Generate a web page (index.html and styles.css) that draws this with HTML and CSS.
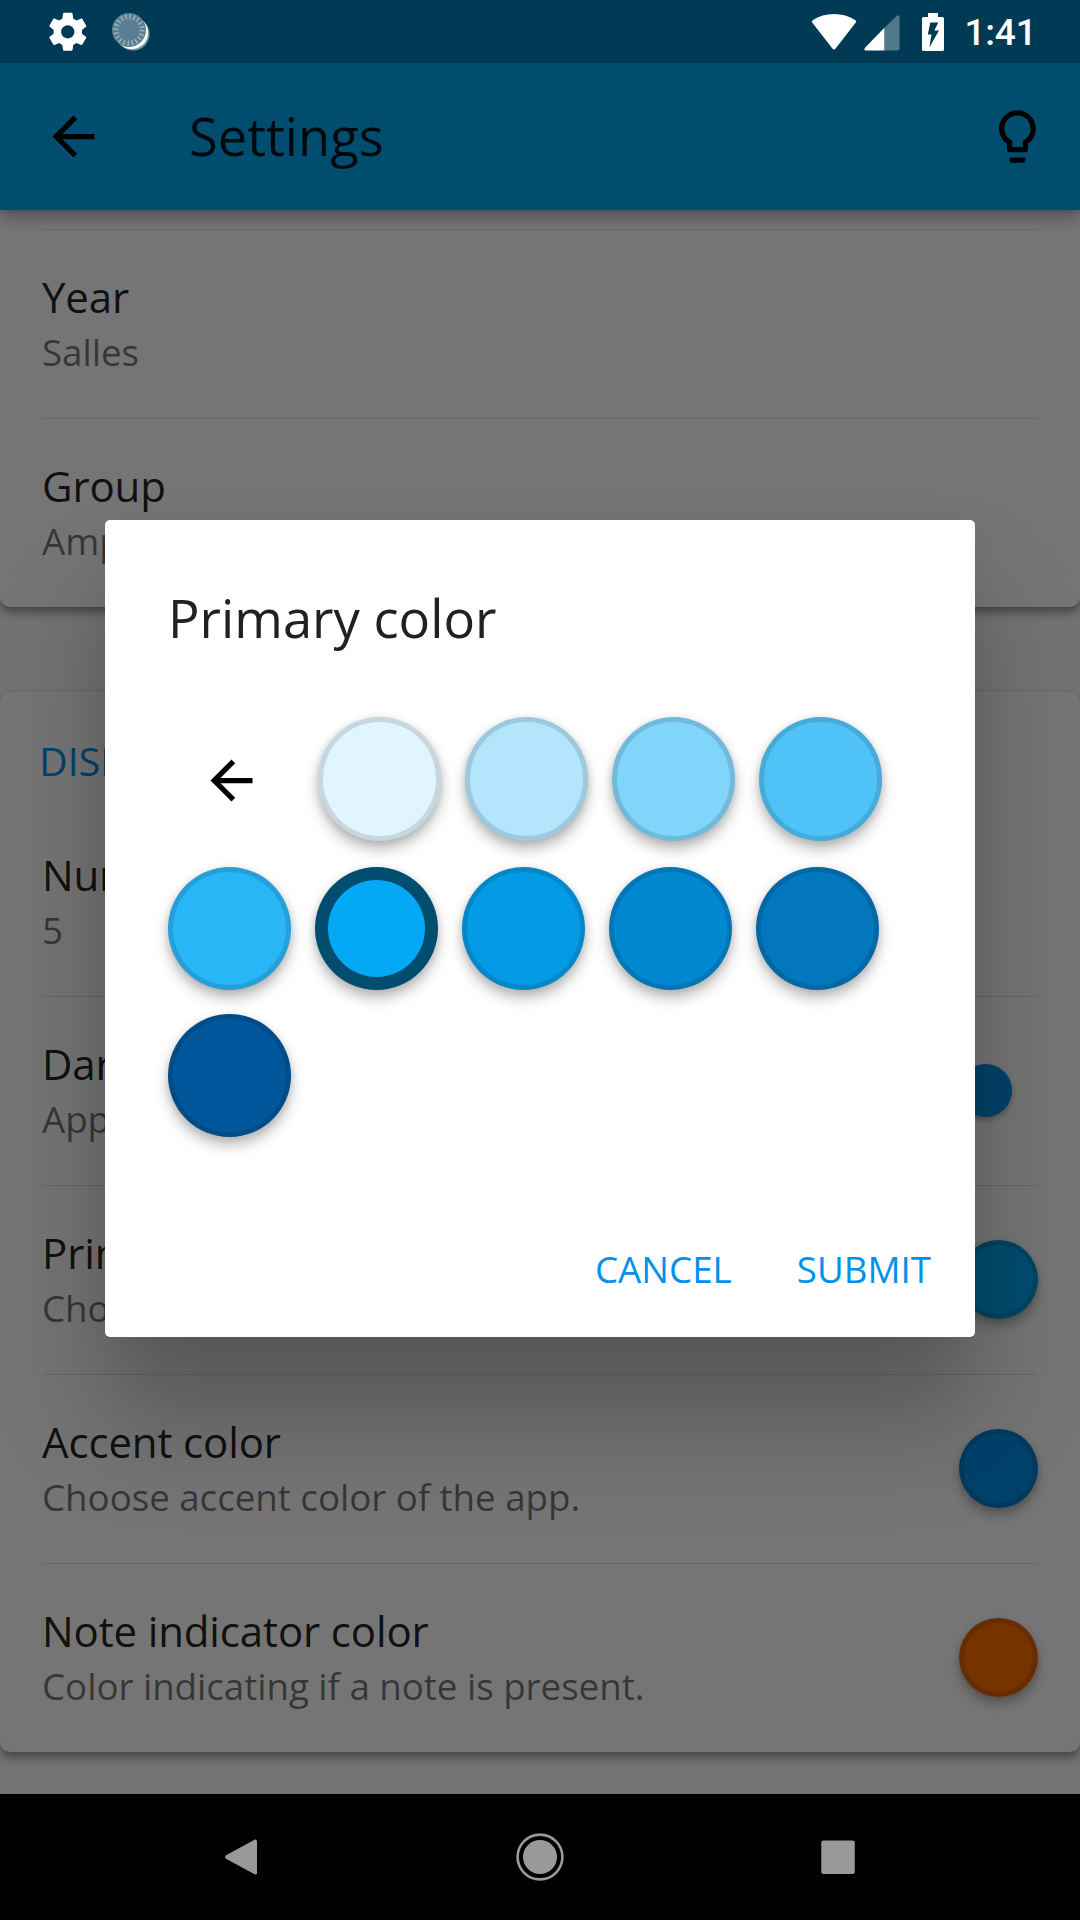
FILE: index.html
```html
<!DOCTYPE html>
<html lang="en">
<head>
<meta charset="utf-8">
<title>Settings</title>
<link rel="stylesheet" href="styles.css">
</head>
<body>
<div class="screen">
  <div class="page">
    <header class="app-bar">
      <svg class="icon" viewBox="0 0 24 24"><path d="M20 11H7.83l5.59-5.59L12 4l-8 8 8 8 1.41-1.41L7.83 13H20v-2z"/></svg>
      <h1 class="app-title">Settings</h1>
      <svg class="icon" viewBox="0 0 24 24"><path d="M9 21c0 .55.45 1 1 1h4c.55 0 1-.45 1-1v-1H9v1zm3-19C8.14 2 5 5.14 5 9c0 2.38 1.19 4.47 3 5.74V17c0 .55.45 1 1 1h6c.55 0 1-.45 1-1v-2.26c1.81-1.27 3-3.36 3-5.74 0-3.86-3.14-7-7-7zm2.85 11.1l-.85.6V16h-4v-2.3l-.85-.6C7.8 12.16 7 10.63 7 9c0-2.76 2.24-5 5-5s5 2.24 5 5c0 1.63-.8 3.16-2.15 4.1z"/></svg>
    </header>
    <main class="content">
      <section class="card card-first">
        <div class="row"><div class="label"><div class="name">Year</div><div class="hint">Salles</div></div></div>
        <div class="row"><div class="label"><div class="name">Group</div><div class="hint">Amphi</div></div></div>
      </section>
      <section class="card">
        <h2 class="section-title">DISPLAY</h2>
        <div class="row no-line"><div class="label"><div class="name">Number of weeks</div><div class="hint">5</div></div></div>
        <div class="row"><div class="label"><div class="name">Dark theme</div><div class="hint">Apply a dark theme.</div></div><div class="switch"><div class="thumb"></div></div></div>
        <div class="row"><div class="label"><div class="name">Primary color</div><div class="hint">Choose primary color of the app.</div></div><div class="dot dot-primary"></div></div>
        <div class="row"><div class="label"><div class="name">Accent color</div><div class="hint">Choose accent color of the app.</div></div><div class="dot dot-accent"></div></div>
        <div class="row"><div class="label"><div class="name">Note indicator color</div><div class="hint">Color indicating if a note is present.</div></div><div class="dot dot-note"></div></div>
      </section>
    </main>
  </div>
  <div class="scrim"></div>

  <div class="status-bar">
    <svg class="gear" viewBox="0 0 24 24"><path d="M19.43 12.98c.04-.32.07-.64.07-.98s-.03-.66-.07-.98l2.11-1.65c.19-.15.24-.42.12-.64l-2-3.46c-.12-.22-.39-.3-.61-.22l-2.49 1c-.52-.4-1.08-.73-1.69-.98l-.38-2.65C14.46 2.18 14.25 2 14 2h-4c-.25 0-.46.18-.49.42l-.38 2.65c-.61.25-1.17.59-1.69.98l-2.49-1c-.23-.09-.49 0-.61.22l-2 3.46c-.13.22-.07.49.12.64l2.11 1.65c-.04.32-.07.65-.07.98s.03.66.07.98l-2.11 1.65c-.19.15-.24.42-.12.64l2 3.46c.12.22.39.3.61.22l2.49-1c.52.4 1.08.73 1.69.98l.38 2.65c.03.24.24.42.49.42h4c.25 0 .46-.18.49-.42l.38-2.65c.61-.25 1.17-.59 1.69-.98l2.49 1c.23.09.49 0 .61-.22l2-3.46c.12-.22.07-.49-.12-.64l-2.11-1.65zM12 15.5c-1.93 0-3.5-1.57-3.5-3.5s1.57-3.5 3.5-3.5 3.5 1.57 3.5 3.5-1.57 3.5-3.5 3.5z"/></svg>
    <svg class="sync" viewBox="0 0 38 38">
      <circle cx="21" cy="21" r="16.5" fill="#7f9aa8"/>
      <circle cx="19.6" cy="19.6" r="16.5" fill="#fff"/>
      <circle cx="17" cy="17" r="17" fill="#5a7f91"/>
      <circle cx="17" cy="17" r="13.2" fill="none" stroke="#a3b7c1" stroke-width="5.2" stroke-dasharray="1.3 2.847"/>
    </svg>
    <div class="spacer"></div>
    <svg class="wifi" viewBox="0 0 46 38"><path d="M1.2 9.6Q0 8.4 1.6 7.3Q11 1 23 1T44.400 7.300Q46 8.400 44.800 9.600L24.600 35.400Q23 37.400 21.400 35.400Z"/></svg>
    <svg class="signal" viewBox="0 0 36 36"><path d="M33 .8Q35.500-1 35.500 2V33.500Q35.500 35.500 33.500 35.500H20.400V12.800Z" opacity=".32"/><path d="M20.400 12.800V35.500H2Q-.6 35.500 1 32.800Z"/></svg>
    <svg class="battery" viewBox="0 0 22 38"><path fill-rule="evenodd" d="M6 0H16V4H20.500Q22 4 22 5.500V36.500Q22 38 20.500 38H1.500Q0 38 0 36.500V5.500Q0 4 1.500 4H6ZM8.300 9.500L5.800 21.500H9.500L7.300 34.500L17 17.500H12.300L16.300 9.500Z"/></svg>
    <span class="clock">1:41</span>
  </div>

  <div class="dialog">
    <h2 class="dialog-title">Primary color</h2>
    <div class="palette">
      <div class="swatches">
        <div class="back"><svg class="icon" viewBox="0 0 24 24"><path d="M20 11H7.830l5.590-5.590L12 4l-8 8 8 8 1.410-1.410L7.830 13H20v-2z"/></svg></div>
        <div class="swatch lb50"></div><div class="swatch lb100"></div><div class="swatch lb200"></div><div class="swatch lb300"></div>
      </div>
      <div class="swatches">
        <div class="swatch lb400"></div><div class="swatch lb500 selected"></div><div class="swatch lb600"></div><div class="swatch lb700"></div><div class="swatch lb800"></div>
      </div>
      <div class="swatches">
        <div class="swatch lb900"></div>
      </div>
    </div>
    <div class="actions"><span>CANCEL</span><span>SUBMIT</span></div>
  </div>

  <nav class="nav-bar">
    <svg viewBox="0 0 48 48"><path d="M38.500 7.500Q39 6 37 6.600L8 22.300Q6 24 8 25.700L37 41.400Q39 42 39 40V8Z"/></svg>
    <svg viewBox="0 0 48 48"><circle cx="24" cy="24" r="17"/><circle cx="24" cy="24" r="22.400" fill="none" stroke="#999" stroke-width="2.600"/></svg>
    <svg viewBox="0 0 48 48"><rect x="7.300" y="7.500" width="33.500" height="33.500" rx="2"/></svg>
  </nav>
</div>
</body>
</html>
```

FILE: styles.css
```css
* { box-sizing: border-box; margin: 0; padding: 0; }

body {
  width: 1080px;
  height: 1920px;
  overflow: hidden;
  background: #000;
  font-family: "Open Sans", "Noto Sans", sans-serif;
}

h1, h2 { font-weight: 400; }

.screen { position: relative; width: 1080px; height: 1920px; overflow: hidden; }

.page { isolation: isolate; display: flex; flex-direction: column; height: 1794px; background: #fafafa; overflow: hidden; }

.app-bar {
  position: relative;
  z-index: 1;
  display: flex;
  align-items: center;
  flex: none;
  height: 210px;
  padding: 63px 31.5px 0 42px;
  background: linear-gradient(rgba(0, 0, 0, .25) 63px, transparent 63px) #03a9f4;
  box-shadow: 0 9px 14px rgba(0, 0, 0, .24), 0 2px 8px rgba(0, 0, 0, .12);
}

.icon { display: block; flex: none; width: 63px; height: 63px; }

.app-title { flex: 1; margin: -2px 0 0 84px; font-size: 52.5px; line-height: 72px; color: rgba(0, 0, 0, .87); }

.content { display: flex; flex-direction: column; gap: 85px; }

.card {
  background: #fff;
  border-radius: 10px;
  box-shadow: 0 6px 10px rgba(0, 0, 0, .34), 0 1px 5px rgba(0, 0, 0, .12);
}

.card-first { padding-top: 19px; border-radius: 0 0 10px 10px; }

.row {
  display: flex;
  align-items: center;
  justify-content: space-between;
  height: 189px;
  margin: 0 42px;
  padding-bottom: 1px;
  border-top: 1px solid rgba(0, 0, 0, .12);
}

.row.no-line { border-top-color: transparent; }

.label { display: flex; flex-direction: column; gap: 2px; padding-bottom: 3px; }
.name { font-size: 42px; line-height: 57px; letter-spacing: -.13px; color: rgba(0, 0, 0, .87); white-space: nowrap; }
.hint { font-size: 36.75px; line-height: 50px; letter-spacing: -.05px; color: rgba(0, 0, 0, .54); white-space: nowrap; }

.section-title { height: 115px; padding: 42px 39.3px 0; font-size: 39.2px; line-height: 54px; color: #0091ea; }

.dot {
  flex: none;
  width: 79px;
  height: 79px;
  border: 5.25px solid rgba(0, 0, 0, .12);
  border-radius: 50%;
  box-shadow: 0 7px 12px rgba(0, 0, 0, .27), 0 1px 6px rgba(0, 0, 0, .1);
}

.dot-primary { background: #03a9f4; }
.dot-accent { background: #0091ea; }
.dot-note { background: #ff6f00; }

.switch { display: flex; align-items: center; width: 87px; height: 37px; margin-right: 26px; border-radius: 19px; background: rgba(0, 145, 234, .5); }
.thumb { width: 53px; height: 53px; margin-left: 34px; border-radius: 50%; background: #0091ea; box-shadow: 0 3px 6px rgba(0, 0, 0, .3); flex: none; }

.scrim { position: absolute; inset: 0 0 126px; background: rgba(0, 0, 0, .54); }

.status-bar { position: absolute; inset: 0 0 auto; display: flex; align-items: center; height: 63px; padding: 0 43.5px 0 45.3px; fill: #fff; }
.gear { width: 45.6px; height: 45.6px; }
.sync { width: 38px; height: 38px; margin-left: 21.500px; }
.spacer { flex: 1; }
.wifi { width: 46px; height: 38px; }
.signal { width: 36px; height: 36px; margin: 2px 0 0 7px; }
.battery { width: 22px; height: 38px; margin-left: 22px; }
.clock { margin: 2px 0 0 20px; font: 500 37px/44px Roboto, sans-serif; letter-spacing: -.2px; color: #fff; }

.dialog {
  position: absolute;
  left: 105px;
  top: 520px;
  display: flex;
  flex-direction: column;
  width: 870px;
  height: 816.5px;
  padding: 62px 44px 0 63px;
  background: #fff;
  border-radius: 5px;
  box-shadow: 0 82px 104px 2px rgba(0, 0, 0, .25), 0 2px 30px rgba(0, 0, 0, .04);
}

.dialog-title { font-size: 52.5px; line-height: 72px; color: #212121; }

.palette { display: flex; flex-direction: column; margin-top: 63px; gap: 23.5px; }
.swatches { display: flex; gap: 23.7px; height: 123.5px; }
.swatches:first-child { height: 126px; }

.back { display: flex; align-items: center; justify-content: center; width: 126px; height: 126px; }

.swatch {
  width: 123.3px;
  height: 123.5px;
  border: 5.25px solid rgba(0, 0, 0, .12);
  border-radius: 50%;
  box-shadow: 0 8px 14px rgba(0, 0, 0, .27), 0 1px 7px rgba(0, 0, 0, .1);
}

.swatch.selected { border: 13px solid rgba(0, 0, 0, .54); }

.lb50 { background: #e1f5fe; }
.lb100 { background: #b3e5fc; }
.lb200 { background: #81d4fa; }
.lb300 { background: #4fc3f7; }
.lb400 { background: #29b6f6; }
.lb500 { background: #03a9f4; }
.lb600 { background: #039be5; }
.lb700 { background: #0288d1; }
.lb800 { background: #0277bd; }
.lb900 { background: #01579b; }

.actions { display: flex; justify-content: flex-end; gap: 65px; margin-top: 107px; font-size: 36.75px; line-height: 50px; color: #0091ea; }

.nav-bar { position: absolute; inset: 1794px 0 0; display: flex; align-items: center; justify-content: center; gap: 250px; padding-right: 1px; background: #000; fill: #999; }
.nav-bar svg { width: 48px; height: 48px; }
```
